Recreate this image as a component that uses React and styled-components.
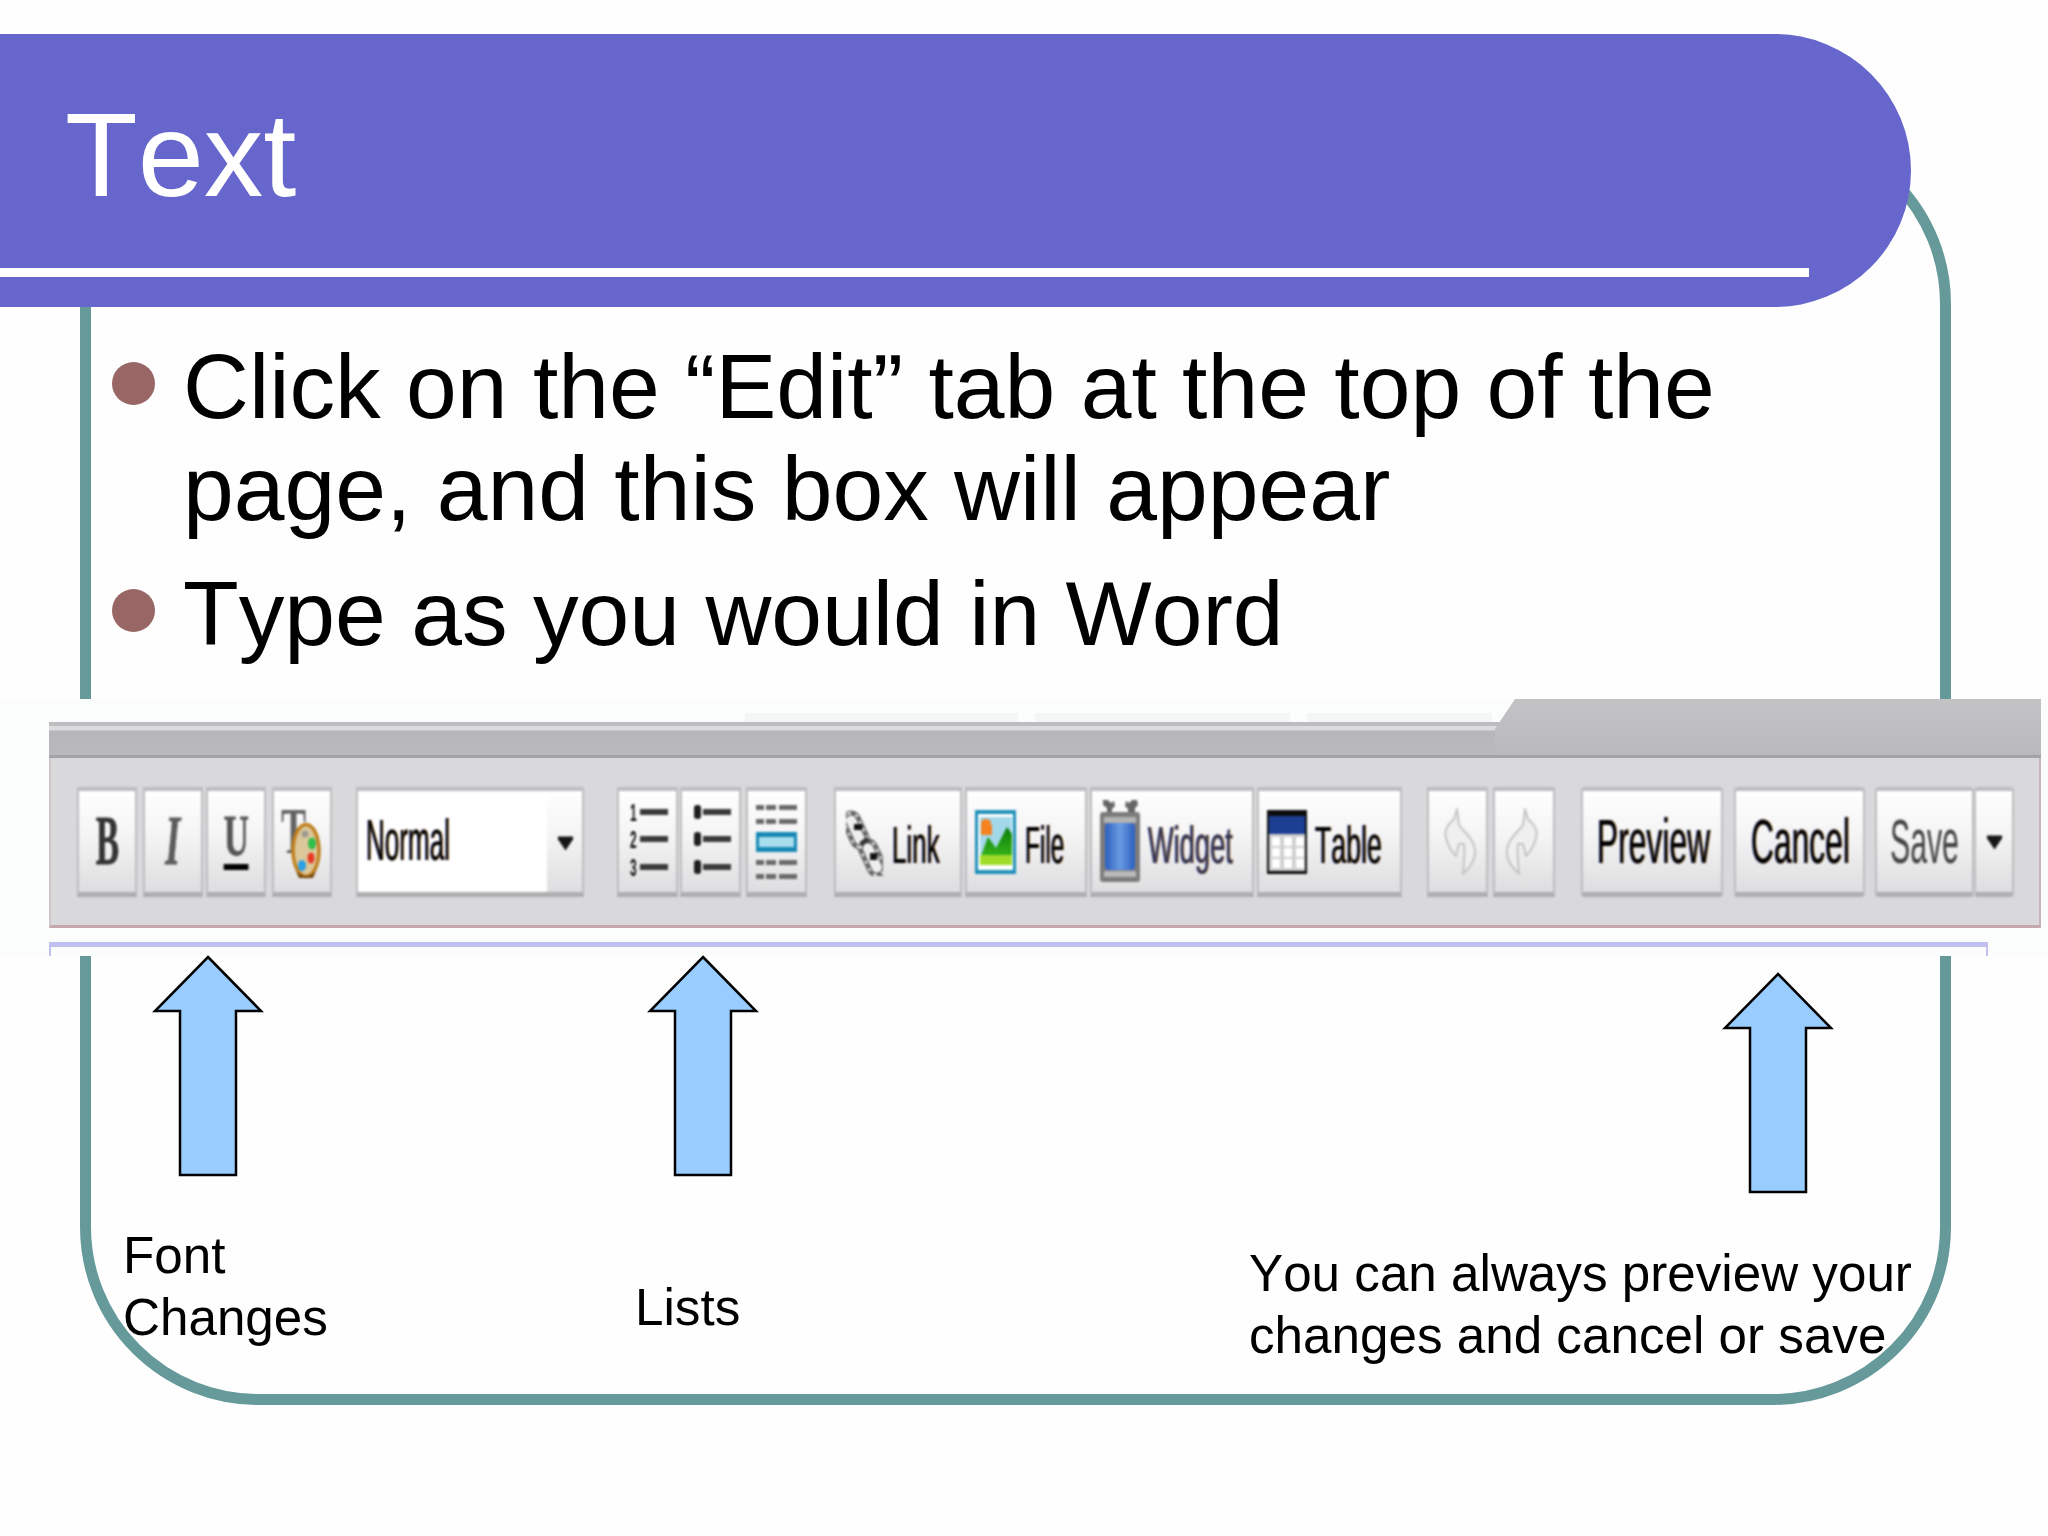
import React from "react"
import styled, { createGlobalStyle } from 'styled-components';

const GlobalStyle = createGlobalStyle`
  html, body {
    margin: 0;
    padding: 0;
    background: #ffffff;
  }
`;

const Slide = styled.div`
  position: relative;
  width: 2048px;
  height: 1536px;
  overflow: hidden;
  background: #fefefe;
  font-family: "Liberation Sans", Arial, sans-serif;
  font-kerning: none;
  color: #000000;
`;

// the rounded frame sits behind everything else on the slide
const Frame = styled.div`
  position: absolute;
  left: 80px;
  top: 126px;
  width: 1871px;
  height: 1279px;
  box-sizing: border-box;
  border: 11px solid #669999;
  border-radius: 178px;
`;

const Content = styled.div`
  position: relative;
  padding-top: 34px;
`;

const TitleBar = styled.header`
  width: 1911px;
  height: 273px;
  box-sizing: border-box;
  padding: 51px 0 0 65px;
  background: #6666cc;
  border-radius: 0 136.5px 136.5px 0;
  display: flex;
  flex-direction: column;
`;

const Title = styled.h1`
  margin: 0;
  height: 183px;
  font-size: 119px;
  font-weight: 400;
  line-height: 140px;
  color: #ffffff;
`;

const TitleRule = styled.div`
  width: 1809px;
  height: 9px;
  margin-left: -65px;
  background: #ffffff;
`;

const Bullets = styled.ul`
  list-style: none;
  margin: 28px 0 35px 112px;
  padding: 0;
  display: flex;
  flex-direction: column;
  gap: 23px;
`;

const Bullet = styled.li`
  display: flex;
  font-size: 91.25px;
  line-height: 102px;
`;

const Dot = styled.span`
  flex: none;
  width: 43px;
  height: 43px;
  margin: 27px 28px 0 0;
  border-radius: 50%;
  background: #996666;
`;

const BulletText = styled.span`
  width: 1640px;
`;

const ToolbarShot = styled.section`
  height: 257px;
  box-sizing: border-box;
  padding-left: 49px;
  background: #fbfcfc;
`;

const TabStrip = styled.div`
  height: 23px;
  box-sizing: border-box;
  padding: 14px 0 0 696px;
  display: flex;
  gap: 17px;
`;

const PaleTab = styled.div`
  width: ${(p) => p.$w}px;
  background: #f2f7f5;
`;

const Toolbar = styled.div`
  position: relative;
  width: 1992px;
`;

const HeadBand = styled.div`
  height: 36px;
  box-sizing: border-box;
  border-top: 4px solid #bdbdbf;
  border-bottom: 3px solid #a4a4a6;
  background: linear-gradient(#dcdcde 0, #dcdcde 4px, #b7b7b9 5px, #b9b9bb 100%);
`;

const ActiveTab = styled.div`
  position: absolute;
  left: 1446px;
  right: 0;
  top: -23px;
  height: 59px;
  box-sizing: border-box;
  border-bottom: 3px solid #a4a4a6;
  background: linear-gradient(#c3c3c5 0, #bebec0 50%, #b9b9bb 100%);
  clip-path: polygon(20px 0, 100% 0, 100% 100%, 0 100%, 0 30px);
`;

const ToolRow = styled.div`
  height: 170px;
  box-sizing: border-box;
  padding: 29px 0 0 26px;
  display: flex;
  background: #d9d9db;
  border-left: 2px solid #d2c6c8;
  border-right: 2px solid #c8b4b8;
  border-bottom: 3px solid #c4a8ac;
`;

const ToolButton = styled.div`
  flex: none;
  width: ${(p) => p.$w}px;
  height: 110px;
  margin-left: ${(p) => p.$ml || 0}px;
  padding-left: ${(p) => p.$pl || 0}px;
  box-sizing: border-box;
  display: flex;
  justify-content: ${(p) => (p.$center ? 'center' : 'flex-start')};
  align-items: center;
  gap: ${(p) => p.$gap || 0}px;
  border: 2px solid #bdbdbf;
  border-top-width: 4px;
  border-bottom-width: 5px;
  border-bottom-color: #aeaeb0;
  border-radius: ${(p) => (p.$soft ? '4px' : '0')};
  background: linear-gradient(#ffffff 0%, #f4f4f5 45%, #dedee0 100%);
  filter: blur(0.8px);
`;

const SelectField = styled.div`
  flex: none;
  width: 189px;
  height: 100%;
  margin-right: 2px;
  padding-left: 8px;
  box-sizing: border-box;
  background: #ffffff;
  display: flex;
`;

const SelectCaret = styled.div`
  flex: 1;
  display: flex;
  justify-content: center;
  align-items: center;
  padding-top: 2px;
`;

const Label = styled.span`
  flex: none;
  align-self: flex-start;
  width: ${(p) => p.$w}px;
  margin-top: ${(p) => p.$top}px;
  font-size: ${(p) => p.$size}px;
  line-height: 1;
  white-space: nowrap;
  color: ${(p) => p.$color || '#000000'};
  transform: scaleX(${(p) => p.$squeeze});
  transform-origin: left center;
  text-shadow: ${(p) => (p.$plain ? 'none' : '1px 0 #c98a2a, -1px 0 #2a3fb0')};
`;

const Glyph = styled.span`
  align-self: flex-start;
  margin-top: ${(p) => p.$top}px;
  font-family: "Liberation Serif", "Times New Roman", serif;
  font-weight: 700;
  font-style: ${(p) => (p.$italic ? 'italic' : 'normal')};
  font-size: ${(p) => p.$size}px;
  line-height: 1;
  color: ${(p) => p.$color};
  -webkit-text-stroke: 0.8px ${(p) => p.$color};
  transform: scaleX(${(p) => p.$squeeze});
  border-bottom: ${(p) => (p.$underline ? '6px solid #000000' : 'none')};
`;

const GuideLine = styled.div`
  width: 1939px;
  height: 14px;
  margin-top: 14px;
  box-sizing: border-box;
  border: 2px solid #c0c0ee;
  border-top-width: 5px;
  border-bottom: none;
`;

const Notes = styled.div`
  display: grid;
  grid-template-columns: 635px 614px 1fr;
  margin-top: -2px;
`;

const Note = styled.div`
  padding-left: ${(p) => p.$pl || 0}px;
  padding-top: ${(p) => p.$top || 0}px;
`;

const ArrowSvg = styled.svg`
  display: block;
  margin-left: ${(p) => p.$ml}px;
`;

const NoteText = styled.p`
  margin: ${(p) => p.$gap}px 0 0;
  font-size: 51.2px;
  line-height: 62px;
`;

const Caret = () => (
  <svg width="17" height="18" viewBox="0 0 18 18">
    <path d="M1 2h16v3l-8 12L1 5z" fill="#161616" />
  </svg>
);

const UpArrow = ({ ml }) => (
  <ArrowSvg $ml={ml} width="114" height="224" viewBox="-2 -2 114 224">
    <path
      d="M55 1L108 55H83V219H27V55H2z"
      fill="#99ccff"
      stroke="#000000"
      strokeWidth="2.5"
    />
  </ArrowSvg>
);

const PaletteIcon = () => (
  <svg width="50" height="92" viewBox="0 -10 50 92">
    <text
      transform="translate(2 47) scale(0.58 1)"
      fontFamily="Liberation Serif"
      fontWeight="700"
      fontSize="65"
      fill="#626262"
    >
      T
    </text>
    <ellipse cx="27" cy="44.5" rx="13" ry="26" fill="#dcc79a" stroke="#c0801e" strokeWidth="3.5" />
    <path d="M17 65q10 10 20 0l-3 7h-14z" fill="#74460f" />
    <circle cx="26" cy="28" r="3.5" fill="#9c9c90" />
    <ellipse cx="33" cy="37.5" rx="4" ry="6" fill="#2fbf4a" />
    <ellipse cx="32" cy="52" rx="3.5" ry="5.5" fill="#e63a24" />
    <ellipse cx="23" cy="59.5" rx="4" ry="5.5" fill="#2a9fe6" />
  </svg>
);

const OrderedIcon = () => (
  <svg width="57" height="101" viewBox="0 0 57 101">
    <rect x="21" y="18" width="28" height="6" fill="#3a3a3a" />
    <rect x="21" y="45" width="28" height="6" fill="#3a3a3a" />
    <rect x="21" y="73" width="28" height="6" fill="#3a3a3a" />
    <g fontFamily="Liberation Sans" fontWeight="700" fontSize="24" fill="#111111">
      <text transform="translate(11 30) scale(0.5 1)">1</text>
      <text transform="translate(11 57) scale(0.5 1)">2</text>
      <text transform="translate(11 85) scale(0.5 1)">3</text>
    </g>
  </svg>
);

const BulletedIcon = () => (
  <svg width="57" height="101" viewBox="0 0 57 101">
    {[18, 45, 73].map((y) => (
      <g key={y}>
        <rect x="12" y={y - 4} width="7" height="14" rx="3" fill="#1e1e1e" />
        <rect x="21" y={y} width="28" height="6" fill="#3a3a3a" />
      </g>
    ))}
  </svg>
);

const BlockIcon = () => (
  <svg width="57" height="101" viewBox="0 0 57 101">
    {[16, 30, 71, 85].map((y) => (
      <g key={y} fill="#6a6a6a">
        <rect x="8" y={y - 2} width="8" height="5" />
        <rect x="18" y={y - 2} width="10" height="5" />
        <rect x="31" y={y - 2} width="18" height="5" />
      </g>
    ))}
    <rect x="8" y="41" width="41" height="20" fill="#1788b4" />
    <rect x="11" y="46" width="35" height="10" fill="#a9deee" />
  </svg>
);

const LinkIcon = () => (
  <svg width="37" height="68" viewBox="0 0 37 68">
    <g fill="#efefef" stroke="#666666" strokeWidth="5">
      <rect x="2" y="4" width="15" height="36" rx="7.5" transform="rotate(-25 9.5 22)" />
      <rect x="19" y="32" width="15" height="36" rx="7.5" transform="rotate(-25 26.5 50)" />
    </g>
    <g fill="none" stroke="#ffffff" strokeWidth="2" strokeDasharray="3 5">
      <rect x="2" y="4" width="15" height="36" rx="7.5" transform="rotate(-25 9.5 22)" />
      <rect x="19" y="32" width="15" height="36" rx="7.5" transform="rotate(-25 26.5 50)" />
    </g>
    <rect x="8" y="16" width="8" height="6" fill="#111111" />
    <rect x="24" y="45" width="7" height="7" fill="#111111" />
    <path d="M15 36L22 31" stroke="#333333" strokeWidth="5" />
  </svg>
);

const FileIcon = () => (
  <svg width="41" height="64" viewBox="0 0 41 64">
    <defs>
      <linearGradient id="hill" x1="0" y1="0" x2="0" y2="1">
        <stop offset="0" stopColor="#0a7d0a" />
        <stop offset="1" stopColor="#35b21a" />
      </linearGradient>
    </defs>
    <rect width="41" height="64" fill="#1f8fb8" />
    <rect x="3" y="4" width="35" height="56" fill="#ffffff" />
    <rect x="5" y="7" width="32" height="48" fill="#a3d8ea" />
    <ellipse cx="11" cy="13" rx="5" ry="4" fill="#f5821f" />
    <rect x="6" y="15" width="11" height="10" fill="#f5821f" />
    <path d="M6 46L13 27L21 38L32 17L37 24V46z" fill="url(#hill)" />
    <rect x="5" y="45" width="32" height="10" fill="#9fdc2a" />
  </svg>
);

const WidgetIcon = () => (
  <svg width="40" height="83" viewBox="0 0 40 83">
    <defs>
      <linearGradient id="tube" x1="0" y1="0" x2="1" y2="0">
        <stop offset="0" stopColor="#2c5fc0" />
        <stop offset="0.5" stopColor="#6a9be2" />
        <stop offset="1" stopColor="#2c5fc0" />
      </linearGradient>
    </defs>
    <path d="M3 0h5l3 3 3-2 1 5-3 3v5H7V8L3 5zM37 0h-5l-3 3-3-2-1 5 3 3v5h7V8l3-3z" fill="#666666" />
    <rect y="12" width="40" height="70" rx="3" fill="#7c7c7c" />
    <rect x="4" y="17" width="32" height="6" fill="#b4b4b4" />
    <rect x="5" y="23" width="30" height="47" rx="4" fill="url(#tube)" />
    <rect x="4" y="71" width="32" height="6" fill="#b8b8b8" />
  </svg>
);

const TableIcon = () => (
  <svg width="40" height="64" viewBox="0 0 40 64">
    <rect width="40" height="64" fill="#0c0c0c" />
    <rect x="2" y="6" width="36" height="18" fill="#1c3f94" />
    <rect x="2" y="24" width="36" height="37" fill="#cfcfcf" />
    {[27, 38, 49].map((y) =>
      [5, 17, 29].map((x) => <rect key={`${x}${y}`} x={x} y={y} width="8" height="9" fill="#ffffff" />),
    )}
  </svg>
);

const HistoryIcon = ({ flip }) => (
  <svg width="36" height="70" viewBox="8 15 36 70" style={flip ? { transform: 'scaleX(-1)' } : undefined}>
    <path
      d="M25 17L22 27C15 33 12 40 14 46C16 54 20 60 24 64L27 52L32 52C33 62 32 72 31 82C38 75 44 68 43 58C42 47 32 40 27 33Z"
      fill="#efeff0"
      stroke="#c4c4c6"
      strokeWidth="2"
      strokeLinejoin="round"
    />
  </svg>
);

export default function App() {
  return (
    <Slide>
      <GlobalStyle />
      <Frame />
      <Content>
        <TitleBar>
          <Title>Text</Title>
          <TitleRule />
        </TitleBar>

        <Bullets>
          <Bullet>
            <Dot />
            <BulletText>Click on the “Edit” tab at the top of the page, and this box will appear</BulletText>
          </Bullet>
          <Bullet>
            <Dot />
            <BulletText>Type as you would in Word</BulletText>
          </Bullet>
        </Bullets>

        <ToolbarShot>
          <TabStrip>
            <PaleTab $w={273} />
            <PaleTab $w={255} />
            <PaleTab $w={185} />
          </TabStrip>
          <Toolbar>
            <HeadBand />
            <ActiveTab />
            <ToolRow>
              <ToolButton $w={60} $center>
                <Glyph $size={70} $squeeze={0.5} $top={15} $color="#333333">B</Glyph>
              </ToolButton>
              <ToolButton $w={60} $ml={6} $center>
                <Glyph $size={70} $squeeze={0.55} $top={15} $color="#5c5c5c" $italic>I</Glyph>
              </ToolButton>
              <ToolButton $w={60} $ml={3} $center>
                <Glyph $size={56} $squeeze={0.62} $top={17} $color="#555555" $underline>U</Glyph>
              </ToolButton>
              <ToolButton $w={60} $ml={6} $pl={5}>
                <PaletteIcon />
              </ToolButton>

              <ToolButton $w={228} $ml={24}>
                <SelectField>
                  <Label $size={58} $squeeze={0.45} $top={20} $w={84}>Normal</Label>
                </SelectField>
                <SelectCaret><Caret /></SelectCaret>
              </ToolButton>

              <ToolButton $w={61} $ml={33}><OrderedIcon /></ToolButton>
              <ToolButton $w={61} $ml={2}><BulletedIcon /></ToolButton>
              <ToolButton $w={61} $ml={5}><BlockIcon /></ToolButton>

              <ToolButton $w={128} $ml={27} $pl={10} $gap={9}>
                <LinkIcon />
                <Label $size={51} $squeeze={0.51} $top={29} $w={48}>Link</Label>
              </ToolButton>
              <ToolButton $w={122} $ml={3} $pl={8} $gap={9}>
                <FileIcon />
                <Label $size={51} $squeeze={0.48} $top={29} $w={39}>File</Label>
              </ToolButton>
              <ToolButton $w={164} $ml={3} $pl={8} $gap={8}>
                <WidgetIcon />
                <Label $size={51} $squeeze={0.535} $top={29} $w={85} $color="#33334d">Widget</Label>
              </ToolButton>
              <ToolButton $w={145} $ml={3} $pl={8} $gap={8}>
                <TableIcon />
                <Label $size={51} $squeeze={0.525} $top={29} $w={67}>Table</Label>
              </ToolButton>

              <ToolButton $w={61} $ml={25} $center><HistoryIcon /></ToolButton>
              <ToolButton $w={62} $ml={5} $center><HistoryIcon flip /></ToolButton>

              <ToolButton $w={142} $ml={26} $pl={14} $soft>
                <Label $size={63} $squeeze={0.505} $top={19} $w={113}>Preview</Label>
              </ToolButton>
              <ToolButton $w={131} $ml={11} $pl={15} $soft>
                <Label $size={63} $squeeze={0.505} $top={19} $w={99}>Cancel</Label>
              </ToolButton>
              <ToolButton $w={99} $ml={10} $pl={13} $soft>
                <Label $size={63} $squeeze={0.48} $top={19} $w={69} $color="#444444" $plain>Save</Label>
              </ToolButton>
              <ToolButton $w={40} $center $soft><Caret /></ToolButton>
            </ToolRow>
            <GuideLine />
          </Toolbar>
        </ToolbarShot>

        <Notes>
          <Note $pl={123}>
            <UpArrow ml={28} />
            <NoteText $gap={47}>Font<br />Changes</NoteText>
          </Note>
          <Note>
            <UpArrow ml={11} />
            <NoteText $gap={99}>Lists</NoteText>
          </Note>
          <Note $top={17}>
            <UpArrow ml={472} />
            <NoteText $gap={48}>You can always preview your<br />changes and cancel or save</NoteText>
          </Note>
        </Notes>
      </Content>
    </Slide>
  );
}
